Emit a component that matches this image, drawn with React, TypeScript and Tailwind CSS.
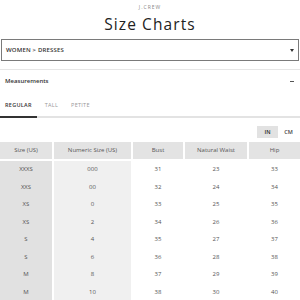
import { useState } from 'react';

// ==================== DATA ====================

const TABS = ['REGULAR', 'TALL', 'PETITE'];

const COLUMNS = ['Size (US)', 'Numeric Size (US)', 'Bust', 'Natural Waist', 'Hip'];

const ROWS: string[][] = [
    ['XXXS', '000', '31', '23', '33'],
    ['XXS', '00', '32', '24', '34'],
    ['XS', '0', '33', '25', '35'],
    ['XS', '2', '34', '26', '36'],
    ['S', '4', '35', '27', '37'],
    ['S', '6', '36', '28', '38'],
    ['M', '8', '37', '29', '39'],
    ['M', '10', '38', '30', '40'],
];

const COL_WIDTHS = ['w-[52px]', 'w-[77px]', 'w-[50px]', 'w-[62px]', 'flex-1'];
const BODY_BG = ['bg-[#e1e1e1]', 'bg-[#f0f0f0]', 'bg-white', 'bg-white', 'bg-white'];

// ==================== APP ====================

export default function App() {
    const [tab, setTab] = useState('REGULAR');
    const [unit, setUnit] = useState<'IN' | 'CM'>('IN');

    return (
        <div className="w-[300px] h-[300px] overflow-hidden bg-white text-[#333] antialiased" style={{ fontFamily: '"Open Sans", sans-serif' }}>
            {/* Brand + Title */}
            <div className="flex flex-col items-center pt-[4px]">
                <p className="text-[5px] leading-[6px] tracking-[0.2em] text-[#888]">J.CREW</p>
                <h1 className="mt-[3px] text-[15.5px] leading-[22px] tracking-[0.07em] text-[#222]">Size Charts</h1>
            </div>

            {/* Category select */}
            <div className="mt-[4px] mx-px h-[22px] border border-[#7a7a7a] flex items-center justify-between pl-[4px] pr-[4px]">
                <span className="text-[6px] font-semibold tracking-[0.03em] text-[#333]">WOMEN &gt; DRESSES</span>
                <span className="w-0 h-0 border-l-[2.5px] border-r-[2.5px] border-t-[3px] border-l-transparent border-r-transparent border-t-[#333]" />
            </div>

            <div className="mt-[8px] h-px bg-[#e6e6e6]" />

            {/* Measurements header */}
            <div className="h-[22px] flex items-center justify-between pl-[5px] pr-[6px]">
                <span className="text-[6px] font-semibold text-[#333]">Measurements</span>
                <span className="w-[4px] h-px bg-[#555]" />
            </div>

            {/* Tabs */}
            <div className="mt-[3px] flex border-b-2 border-[#e3e3e3]">
                {TABS.map(t => (
                    <button
                        key={t}
                        onClick={() => setTab(t)}
                        className={`relative h-[21px] px-[5px] mr-[3px] text-[5.5px] tracking-[0.05em] ${tab === t ? 'text-[#333] font-semibold' : 'text-[#999]'}`}
                    >
                        {t}
                        {tab === t && <span className="absolute left-0 right-0 -bottom-[2px] h-[2px] bg-[#333]" />}
                    </button>
                ))}
            </div>

            {/* Unit toggle */}
            <div className="mt-[8px] flex justify-end pr-[1px]">
                {(['IN', 'CM'] as const).map(u => (
                    <button
                        key={u}
                        onClick={() => setUnit(u)}
                        className={`w-[21px] h-[12px] text-[5.5px] font-semibold ${unit === u ? 'bg-[#e2e2e2] text-[#222]' : 'bg-white text-[#444]'}`}
                    >
                        {u}
                    </button>
                ))}
            </div>

            {/* Table */}
            <div className="mt-[4px] flex flex-col gap-[2px]">
                <div className="flex gap-[2px] h-[17px]">
                    {COLUMNS.map((c, i) => (
                        <div key={c} className={`${COL_WIDTHS[i]} bg-[#e3e3e3] flex items-center justify-center text-[6px] text-[#555]`}>
                            {c}
                        </div>
                    ))}
                </div>
                <div className="flex gap-[2px]">
                    {COLUMNS.map((c, i) => (
                        <div key={c} className={`${COL_WIDTHS[i]} ${BODY_BG[i]} flex flex-col`}>
                            {ROWS.map((r, j) => (
                                <div key={j} className="h-[17.5px] flex items-center justify-center text-[6px] text-[#555]">
                                    {r[i]}
                                </div>
                            ))}
                        </div>
                    ))}
                </div>
            </div>
        </div>
    );
}
